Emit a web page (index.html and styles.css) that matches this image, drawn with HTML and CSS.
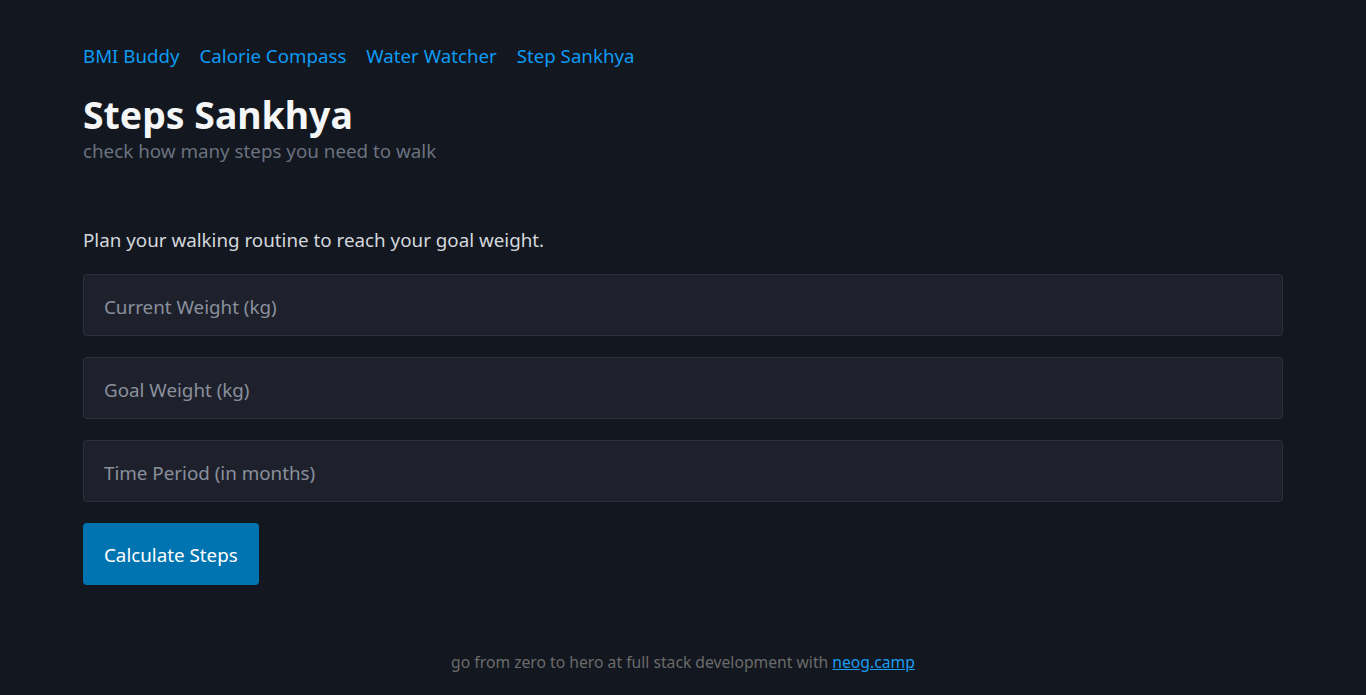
FILE: index.html
```html
<!DOCTYPE html>
<html lang="en">
<head>
<meta charset="utf-8">
<title>Steps Sankhya</title>
<link rel="stylesheet" href="styles.css">
</head>
<body>
<div class="page">
  <nav class="nav">
    <a href="#">BMI Buddy</a>
    <a href="#">Calorie Compass</a>
    <a href="#">Water Watcher</a>
    <a href="#">Step Sankhya</a>
  </nav>
  <header class="header">
    <h1 class="title">Steps Sankhya</h1>
    <p class="subtitle">check how many steps you need to walk</p>
  </header>
  <main class="main">
    <p class="intro">Plan your walking routine to reach your goal weight.</p>
    <form class="form">
      <input class="field" type="number" placeholder="Current Weight (kg)">
      <input class="field" type="number" placeholder="Goal Weight (kg)">
      <input class="field" type="number" placeholder="Time Period (in months)">
      <button class="btn" type="button">Calculate Steps</button>
    </form>
  </main>
  <footer class="footer">go from zero to hero at full stack development with <a href="#">neog.camp</a></footer>
</div>
</body>
</html>
```
FILE: styles.css
```css
html, body {
  margin: 0;
  padding: 0;
  background: #13171f;
}
body {
  font-family: "Noto Sans", "Open Sans", sans-serif;
  color: #e5e7eb;
}
.page {
  max-width: 1200px;
  margin: 0 auto;
  padding-top: 40px;
}
.nav {
  display: flex;
  gap: 20px;
  font-size: 18.7px;
  line-height: 32px;
}
.nav a {
  color: #0d9bf5;
  text-decoration: none;
}
.header {
  margin-top: 19px;
}
.title {
  margin: 0;
  font-size: 37.4px;
  line-height: 48px;
  font-weight: 700;
  color: #f5f6f8;
}
.subtitle {
  margin: 0;
  font-size: 18.8px;
  line-height: 24px;
  color: #6b7280;
}
.main {
  margin-top: 65px;
}
.intro {
  margin: 0 0 22px;
  font-size: 18.8px;
  line-height: 24px;
  color: #d4d8de;
}
.form {
  display: flex;
  flex-direction: column;
  align-items: flex-start;
  gap: 21px;
}
.field {
  box-sizing: border-box;
  width: 100%;
  height: 62px;
  padding: 4px 20px 0;
  background: #1e212c;
  border: 1px solid #2c303d;
  border-radius: 4px;
  font-family: inherit;
  font-size: 18.8px;
  color: #e5e7eb;
  outline: none;
}
.field::placeholder {
  color: #8a909c;
}
.btn {
  height: 62px;
  padding: 2px 21px 0;
  background: #0074b0;
  border: none;
  border-radius: 4px;
  color: #ffffff;
  font-family: inherit;
  font-size: 18.8px;
  cursor: pointer;
}
.footer {
  margin-top: 65px;
  text-align: center;
  font-size: 15.7px;
  line-height: 24px;
  color: #6b6b6b;
}
.footer a {
  color: #1a9cf0;
}
```
